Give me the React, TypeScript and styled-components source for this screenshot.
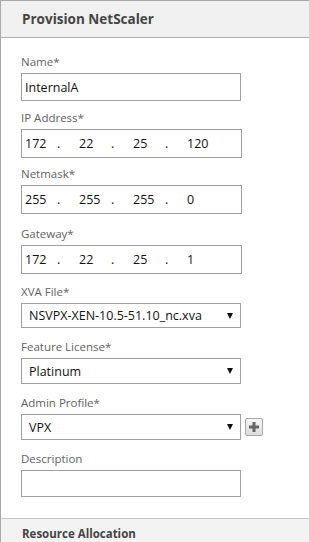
import styled, { createGlobalStyle } from "styled-components";

const GlobalStyle = createGlobalStyle`
  html, body {
    margin: 0;
    padding: 0;
    background: #ffffff;
  }
  body {
    font-family: "Open Sans", "Noto Sans", sans-serif;
  }
`;

const Panel = styled.div`
  width: 309px;
  height: 542px;
  box-sizing: border-box;
  border-left: 1px solid #a9a9a9;
  border-top: 1px solid #a9a9a9;
  background: #fff;
  overflow: hidden;
  display: flex;
  flex-direction: column;
`;

const Header = styled.div`
  height: 37px;
  flex-shrink: 0;
  box-sizing: border-box;
  background: #f0f0f0;
  border-bottom: 1px solid #acacac;
  display: flex;
  align-items: center;
  padding-left: 21px;
  font-size: 13.5px;
  font-weight: 700;
  color: #454545;
`;

const Form = styled.div`
  flex: 1;
  padding: 16px 0 0 20px;
  display: flex;
  flex-direction: column;
`;

const Field = styled.div<{ $mb: number }>`
  display: flex;
  flex-direction: column;
  margin-bottom: ${(p) => p.$mb}px;
`;

const Label = styled.label`
  font-size: 11.5px;
  line-height: 16px;
  color: #626262;
  margin-bottom: 3px;
`;

const Row = styled.div`
  display: flex;
  align-items: center;
  gap: 4px;
`;

const TextInput = styled.input<{ $h: number }>`
  width: 220px;
  height: ${(p) => p.$h}px;
  box-sizing: border-box;
  border: 1px solid #a0a0a0;
  padding: 0 3px;
  font-family: "Open Sans", "Noto Sans", sans-serif;
  font-size: 12.5px;
  color: #111;
  outline: none;
`;

const IpBox = styled.div`
  width: 221px;
  height: 29px;
  box-sizing: border-box;
  border: 1px solid #a0a0a0;
  display: flex;
  align-items: center;
  padding-left: 3px;
  font-size: 12.5px;
  color: #111;
`;

const Octet = styled.span`
  width: 32px;
`;

const Dot = styled.span`
  width: 22px;
`;

const SelectBox = styled.div<{ $h: number }>`
  width: 220px;
  height: ${(p) => p.$h}px;
  box-sizing: border-box;
  border: 1px solid #a0a0a0;
  display: flex;
  align-items: center;
  justify-content: space-between;
  padding: 0 7px 0 7px;
  font-size: 12.5px;
  color: #111;
`;

const Arrow = styled.span`
  width: 0;
  height: 0;
  border-left: 3.5px solid transparent;
  border-right: 3.5px solid transparent;
  border-top: 6px solid #111;
`;

const PlusButton = styled.button`
  width: 18px;
  height: 18px;
  box-sizing: border-box;
  padding: 0;
  border: 1px solid #a8a8a8;
  border-radius: 2px;
  background: linear-gradient(#f7f7f7, #dcdcdc);
  display: flex;
  align-items: center;
  justify-content: center;
`;

const Footer = styled.div`
  height: 24px;
  flex-shrink: 0;
  box-sizing: border-box;
  background: #f3f3f3;
  border-top: 1px solid #c4c4c4;
  padding: 7px 0 0 21px;
  font-size: 11.5px;
  line-height: 16px;
  font-weight: 700;
  color: #454545;
`;

function IpField({ parts }: { parts: string[] }) {
  return (
    <IpBox>
      {parts.map((p, i) => (
        <span key={i} style={{ display: "contents" }}>
          <Octet>{p}</Octet>
          {i < 3 && <Dot>.</Dot>}
        </span>
      ))}
    </IpBox>
  );
}

export default function App() {
  return (
    <>
      <GlobalStyle />
      <Panel>
        <Header>Provision NetScaler</Header>
        <Form>
          <Field $mb={9}>
            <Label>Name*</Label>
            <TextInput $h={28} defaultValue="InternalA" />
          </Field>
          <Field $mb={8}>
            <Label>IP Address*</Label>
            <IpField parts={["172", "22", "25", "120"]} />
          </Field>
          <Field $mb={12}>
            <Label>Netmask*</Label>
            <IpField parts={["255", "255", "255", "0"]} />
          </Field>
          <Field $mb={10}>
            <Label>Gateway*</Label>
            <IpField parts={["172", "22", "25", "1"]} />
          </Field>
          <Field $mb={11}>
            <Label>XVA File*</Label>
            <SelectBox $h={25}>
              NSVPX-XEN-10.5-51.10_nc.xva
              <Arrow />
            </SelectBox>
          </Field>
          <Field $mb={11}>
            <Label>Feature License*</Label>
            <SelectBox $h={26}>
              Platinum
              <Arrow />
            </SelectBox>
          </Field>
          <Field $mb={11}>
            <Label>Admin Profile*</Label>
            <Row>
              <SelectBox $h={26}>
                VPX
                <Arrow />
              </SelectBox>
              <PlusButton aria-label="Add">
                <svg width="10" height="10" viewBox="0 0 10 10">
                  <path d="M3.5 0h3v3.5H10v3H6.5V10h-3V6.5H0v-3h3.5z" fill="#666" />
                </svg>
              </PlusButton>
            </Row>
          </Field>
          <Field $mb={0}>
            <Label>Description</Label>
            <TextInput $h={27} />
          </Field>
        </Form>
        <Footer>Resource Allocation</Footer>
      </Panel>
    </>
  );
}
